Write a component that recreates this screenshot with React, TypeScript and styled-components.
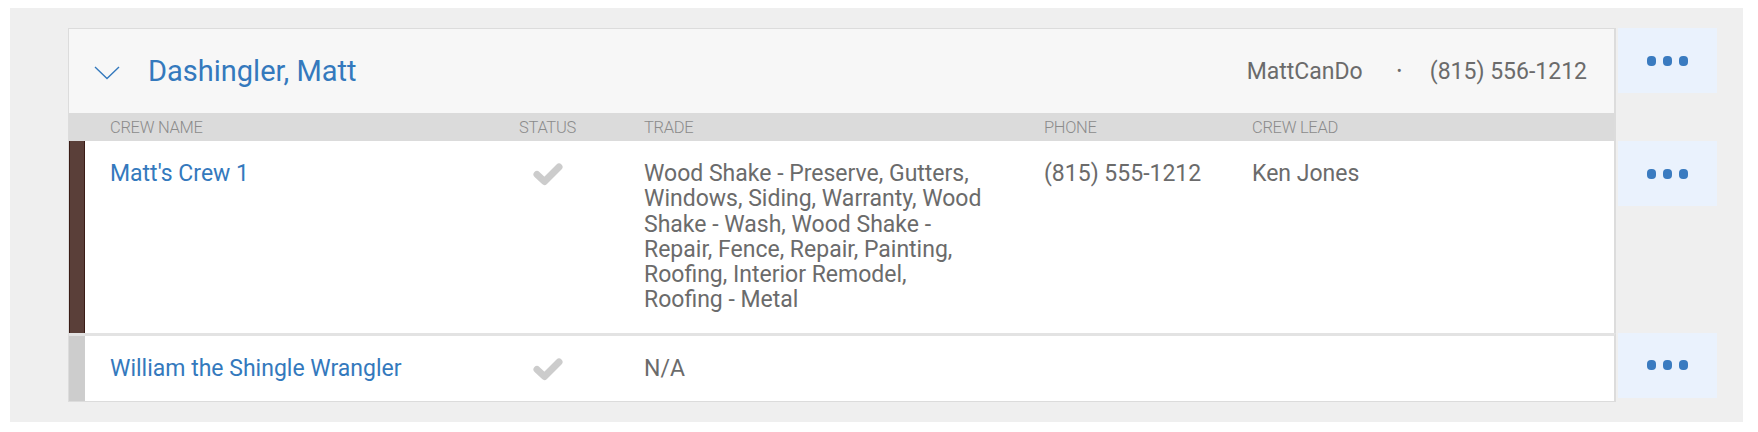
import React from 'react';
import styled, { createGlobalStyle } from 'styled-components';

const GlobalStyle = createGlobalStyle`
  html, body {
    margin: 0;
    padding: 0;
    background: #ffffff;
    font-family: Roboto, 'Liberation Sans', Arial, sans-serif;
  }
`;

const BLUE = '#3479bd';
const TEXT = '#6b6b6b';

interface Crew {
  name: string;
  active: boolean;
  trade: string;
  phone: string;
  lead: string;
  color: string;
  edge: string;
}

const crews: Crew[] = [
  {
    name: "Matt's Crew 1",
    active: true,
    trade: 'Wood Shake - Preserve, Gutters, Windows, Siding, Warranty, Wood Shake - Wash, Wood Shake - Repair, Fence, Repair, Painting, Roofing, Interior Remodel, Roofing - Metal',
    phone: '(815) 555-1212',
    lead: 'Ken Jones',
    color: '#5a3f39',
    edge: '#3a1c16'
  },
  {
    name: 'William the Shingle Wrangler',
    active: true,
    trade: 'N/A',
    phone: '',
    lead: '',
    color: '#cdcdcd',
    edge: '#cdcdcd'
  }
];

const Page = styled.div`
  padding: 8px 15px 11px 10px;
`;

const Panel = styled.div`
  background: #efefef;
  padding: 20px 26px 20px 58px;
  display: grid;
  grid-template-columns: 1fr 99px;
  column-gap: 2px;
`;

const CardCell = styled.div<{ $first?: boolean; $last?: boolean; $divider?: boolean }>`
  border-left: 1px solid #dcdcdc;
  border-right: 2px solid #dcdcdc;
  border-top: ${({ $first, $divider }) => ($first ? '1px solid #dcdcdc' : $divider ? '3px solid #e3e3e3' : 'none')};
  border-bottom: ${({ $last }) => ($last ? '1px solid #dcdcdc' : 'none')};
`;

const Header = styled(CardCell)`
  background: #f7f7f7;
  height: 84px;
  display: flex;
  align-items: center;
  padding: 0 27px 0 25px;
`;

const Chevron = styled.svg`
  width: 26px;
  height: 14px;
  flex: none;
  margin-right: 28px;
  margin-top: 3px;
`;

const OwnerName = styled.a`
  color: ${BLUE};
  font-size: 29px;
  text-decoration: none;
  flex: 1;
`;

const Meta = styled.div`
  display: flex;
  align-items: center;
  color: ${TEXT};
  font-size: 23px;
`;

const Bullet = styled.span`
  margin: 0 28px 0 34px;
  font-size: 15px;
`;

const ActionButton = styled.button`
  height: 65px;
  align-self: start;
  border: none;
  background: #eaf2fd;
  display: flex;
  align-items: center;
  justify-content: center;
  gap: 7px;
  padding: 0;
  cursor: pointer;
`;

const Dot = styled.span`
  width: 9px;
  height: 10px;
  border-radius: 4px;
  background: #3a7bc0;
`;

const Spacer = styled.div``;

const Columns = styled(CardCell)`
  display: grid;
  grid-template-columns: 16px 409px 125px 400px 208px 1fr;
`;

const LabelRow = styled(Columns)`
  background: #dbdbdb;
  height: 28px;
  align-items: center;
`;

const Label = styled.div`
  padding-left: 25px;
  color: #8b8b8b;
  font-size: 16.5px;
  font-weight: 300;
  text-transform: uppercase;
  letter-spacing: -0.3px;
`;

const CrewRow = styled(Columns)`
  background: #ffffff;
`;

const Strip = styled.div<{ $color: string; $edge: string }>`
  background: ${({ $color }) => $color};
  border-right: 1px solid ${({ $edge }) => $edge};
  border-left: 1px solid ${({ $edge }) => $edge};
`;

const Cell = styled.div<{ $pr?: number }>`
  padding: 20px ${({ $pr }) => $pr ?? 12}px 20px 25px;
  color: ${TEXT};
  font-size: 23px;
  line-height: 25.3px;
`;

const CrewName = styled.a`
  color: ${BLUE};
  text-decoration: none;
`;

const Check = styled.svg`
  width: 32px;
  height: 24px;
  margin-left: 13px;
  margin-top: 1px;
  display: block;
`;

function Dots (): React.ReactElement {
  return (
    <ActionButton aria-label='More actions'>
      <Dot />
      <Dot />
      <Dot />
    </ActionButton>
  );
}

function CrewLine ({ crew, first, last }: { crew: Crew; first: boolean; last: boolean }): React.ReactElement {
  return (
    <>
      <CrewRow
        $divider={!first}
        $last={last}
      >
        <Strip
          $color={crew.color}
          $edge={crew.edge}
        />
        <Cell>
          <CrewName href='#'>{crew.name}</CrewName>
        </Cell>
        <Cell>
          {crew.active && (
            <Check viewBox='0 0 32 24'>
              <polyline
                fill='none'
                points='5,12.5 12.5,19.5 27,5'
                stroke='#cccccc'
                strokeLinecap='round'
                strokeLinejoin='round'
                strokeWidth='7'
              />
            </Check>
          )}
        </Cell>
        <Cell $pr={31}>{crew.trade}</Cell>
        <Cell>{crew.phone}</Cell>
        <Cell>{crew.lead}</Cell>
      </CrewRow>
      <Dots />
    </>
  );
}

export default function App (): React.ReactElement {
  return (
    <>
      <GlobalStyle />
      <Page>
        <Panel>
          <Header $first>
            <Chevron viewBox='0 0 26 14'>
              <polyline
                fill='none'
                points='1,1 13,12.5 25,1'
                stroke={BLUE}
                strokeWidth='1.4'
              />
            </Chevron>
            <OwnerName href='#'>Dashingler, Matt</OwnerName>
            <Meta>
              <span>MattCanDo</span>
              <Bullet>•</Bullet>
              <span>(815) 556-1212</span>
            </Meta>
          </Header>
          <Dots />

          <LabelRow>
            <span />
            <Label>Crew Name</Label>
            <Label>Status</Label>
            <Label>Trade</Label>
            <Label>Phone</Label>
            <Label>Crew Lead</Label>
          </LabelRow>
          <Spacer />

          {crews.map((crew, i) => (
            <CrewLine
              crew={crew}
              first={i === 0}
              key={crew.name}
              last={i === crews.length - 1}
            />
          ))}
        </Panel>
      </Page>
    </>
  );
}
